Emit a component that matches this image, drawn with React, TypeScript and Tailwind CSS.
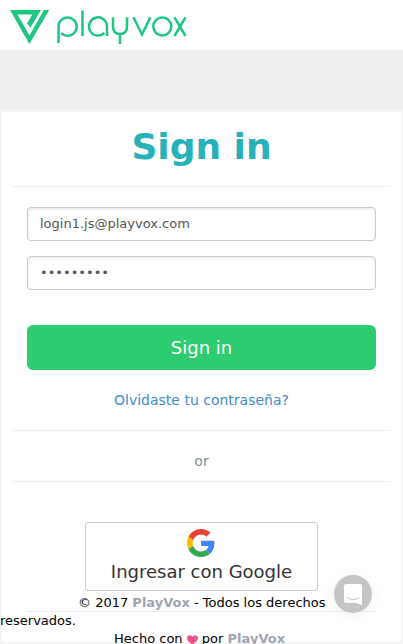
function PlayvoxLogo() {
  return (
    <svg width="178" height="36" viewBox="0 0 178 36" fill="none" stroke="#1dc681" className="mt-[9px] ml-[10px] block" aria-label="playvox">
      <path d="M0 1H31L20.500 18.500L17 14.500L22.300 5.500H7.500L19.400 26.500L34 1H39.200L19.400 35Z" fill="#1dc681" stroke="none" />
      <g strokeWidth="2.500">
        <path d="M48.500 34V17.500a9.100 9.100 0 1 1 2.700 6.600" />
        <path d="M72.500 1.500V27" />
        <path d="M97 27V17.500a9 9.100 0 1 0-2.700 6.500" />
        <path d="M103 8.300V17.500c0 5 2.800 7.500 7 7.500s7-2.500 7-7.500V8.300M110 25V35" />
        <path d="M123.400 8.300L132 25.500L140.400 8.300" />
        <circle cx="152.300" cy="17.500" r="9" />
        <path d="M164.500 8.300L175.500 27M175.500 8.300L164.500 27" />
      </g>
    </svg>
  );
}

function GoogleLogo() {
  return (
    <svg width="28" height="28" viewBox="0 0 48 48" className="-ml-px block" aria-hidden="true">
      <path fill="#EA4335" d="M24 9.5c3.54 0 6.71 1.22 9.21 3.6l6.85-6.85C35.9 2.38 30.47 0 24 0 14.62 0 6.51 5.38 2.56 13.22l7.98 6.19C12.43 13.72 17.74 9.5 24 9.5z" />
      <path fill="#4285F4" d="M46.98 24.55c0-1.57-.15-3.09-.38-4.55H24v9.02h12.94c-.58 2.96-2.26 5.48-4.78 7.18l7.73 6c4.51-4.18 7.09-10.36 7.09-17.65z" />
      <path fill="#FBBC05" d="M10.53 28.59c-.48-1.45-.76-2.99-.76-4.59s.27-3.14.76-4.59l-7.98-6.19C.92 16.46 0 20.12 0 24s.92 7.54 2.56 10.78l7.97-6.19z" />
      <path fill="#34A853" d="M24 48c6.48 0 11.93-2.13 15.89-5.81l-7.73-6c-2.15 1.45-4.92 2.3-8.16 2.3-6.26 0-11.57-4.22-13.47-9.91l-7.98 6.19C6.51 42.62 14.62 48 24 48z" />
    </svg>
  );
}

function Heart() {
  return (
    <svg width="11" height="10" viewBox="0 0 12 11" className="inline-block align-[-2px]" aria-hidden="true">
      <path fill="#f6518c" d="M6 10.900 1 6.200C-1.200 3.400.3.300 3 .3c1.500 0 2.500.9 3 1.800C6.500 1.200 7.500.3 9 .3c2.700 0 4.200 3.100 2 5.900z" />
    </svg>
  );
}

const fieldClass =
  "block h-[34px] w-full rounded-[4px] border border-[#ccc] bg-white px-3 pb-[2px] text-[13px] text-[#555] shadow-[inset_0_1px_3px_rgba(0,0,0,0.1)] outline-none";

export default function App() {
  return (
    <div className="relative flex h-[644px] w-[403px] flex-col overflow-hidden bg-[#eee] font-['DejaVu_Sans',sans-serif]">
      <header className="h-[51px] shrink-0 border-b border-[#eee] bg-white">
        <PlayvoxLogo />
      </header>
      <main className="mt-[59px] h-[534px] border-2 border-[#f5f5f5] bg-white px-[10px]">
        <h1 className="h-[75px] border-b border-[#eee] text-center text-[36px] leading-[69px] font-bold text-[#26b2b8]">Sign in</h1>
        <form className="px-[15px] pt-5" onSubmit={(e) => e.preventDefault()}>
          <input className={fieldClass} type="text" defaultValue="login1.js@playvox.com" />
          <input className={fieldClass + " mt-[15px]"} type="password" defaultValue="password1" />
          <button className="mt-[35px] block h-[45px] w-full rounded-[6px] bg-[#2ecc71] text-[18px] text-white">Sign in</button>
        </form>
        <div className="mt-5 h-[41px] border-b border-[#eee] text-center text-[14px] leading-5 text-[#428bca]">
          <a href="#">Olvidaste tu contraseña?</a>
        </div>
        <div className="h-[51px] border-b border-[#eee] pt-5 text-center text-[14px] leading-5 text-[#78909c]">or</div>
        <div className="mx-[15px] flex h-[130px] justify-center border-b border-[#eee] pt-10">
          <button className="flex h-[69px] w-[233px] flex-col items-center rounded-[3px] border border-[#ccc] bg-white pt-[6px] text-[18px] leading-[26px] text-[#333]">
            <GoogleLogo />
            <span className="mt-[2px]">Ingresar con Google</span>
          </button>
        </div>
      </main>
      <footer className="absolute top-[594px] left-0 w-full text-[13px] leading-[18px] text-black">
        <p className="indent-[78px]">
          © 2017 <b className="text-[#a0a5b1]">PlayVox</b> - Todos los derechos
        </p>
        <p>reservados.</p>
        <p className="pl-[114px] whitespace-nowrap">
          Hecho con <Heart /> por <b className="text-[#a0a5b1]">PlayVox</b>
        </p>
      </footer>
      <button className="absolute top-[575px] left-[334px] flex h-[38px] w-[38px] items-center justify-center rounded-full bg-[#c5c5c5] shadow-[0_2px_18px_rgba(0,0,0,0.06)]" aria-label="Chat">
        <svg width="18" height="21" viewBox="0 0 18 21" fill="none" className="mt-px">
          <path d="M2 0H16a2 2 0 0 1 2 2V21L12.500 19H2a2 2 0 0 1-2-2V2a2 2 0 0 1 2-2Z" fill="white" />
          <path d="M3 13.500q6 4.500 12 0" stroke="#c5c5c5" strokeLinecap="round" />
        </svg>
      </button>
    </div>
  );
}
